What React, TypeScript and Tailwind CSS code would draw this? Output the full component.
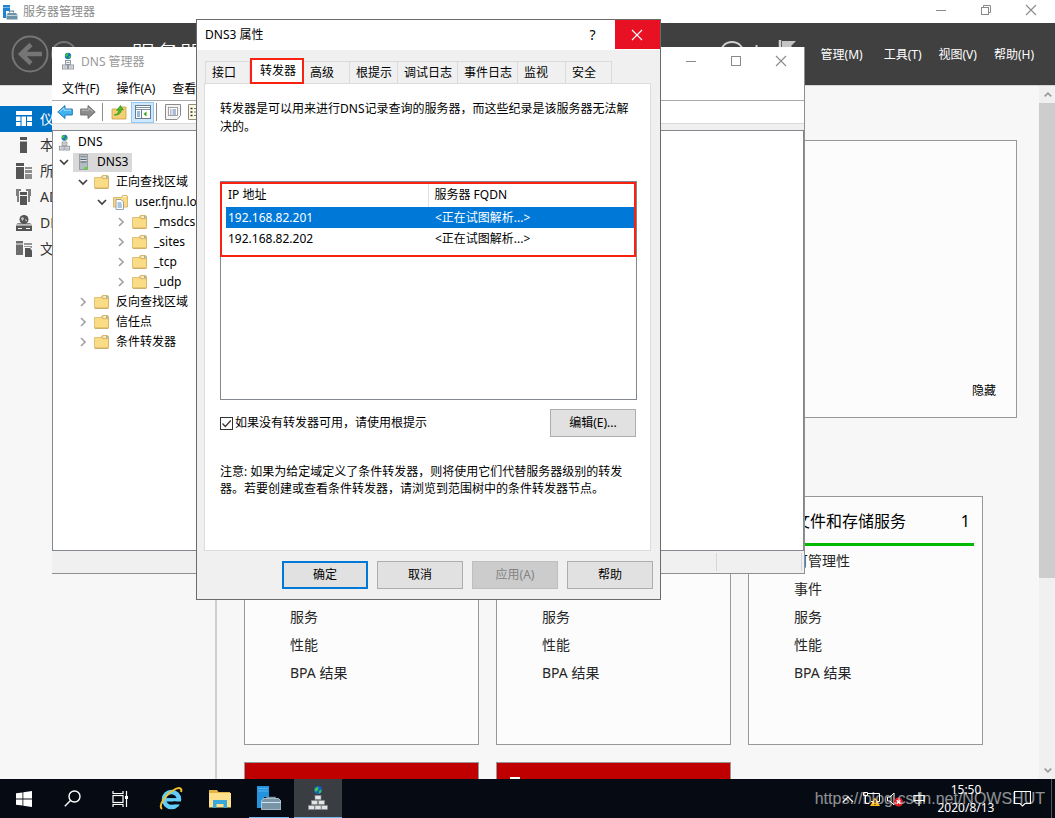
import React, { useState } from 'react';

type Level = 0 | 1 | 2 | 3 | 4;

interface TreeNode {
  label: string;
  level: Level;
  icon: 'dns' | 'server' | 'folder' | 'zone';
  open?: boolean;
  selected?: boolean;
}

const treeNodes: TreeNode[] = [
  { label: 'DNS', level: 0, icon: 'dns' },
  { label: 'DNS3', level: 1, icon: 'server', open: true, selected: true },
  { label: '正向查找区域', level: 2, icon: 'folder', open: true },
  { label: 'user.fjnu.local', level: 3, icon: 'zone', open: true },
  { label: '_msdcs', level: 4, icon: 'folder' },
  { label: '_sites', level: 4, icon: 'folder' },
  { label: '_tcp', level: 4, icon: 'folder' },
  { label: '_udp', level: 4, icon: 'folder' },
  { label: '反向查找区域', level: 2, icon: 'folder' },
  { label: '信任点', level: 2, icon: 'folder' },
  { label: '条件转发器', level: 2, icon: 'folder' },
];

const indent: Record<Level, string> = {
  0: 'pl-1',
  1: 'pl-[6px]',
  2: 'pl-[25px]',
  3: 'pl-11',
  4: 'pl-[63px]',
};

const tabs = [
  { label: '接口', width: 'w-[45px]' },
  { label: '转发器', width: 'w-[54px]' },
  { label: '高级', width: 'w-[46px]' },
  { label: '根提示', width: 'w-12' },
  { label: '调试日志', width: 'w-[60px]' },
  { label: '事件日志', width: 'w-[60px]' },
  { label: '监视', width: 'w-12' },
  { label: '安全', width: 'w-[46px]' },
];

const forwarders = ['192.168.82.201', '192.168.82.202'];

const roleItems = ['可管理性', '事件', '服务', '性能', 'BPA 结果'];

/* Icons */
const DnsIcon = ({ className }: { className: string }) => (
  <svg viewBox="0 0 16 18" className={className}>
    <circle cx="8" cy="4" r="3.2" fill="#1d6fc4" />
    <path d="M6 1.5 8.5 1 8 3.5 6.5 5 5 3.5zM8.5 4.5l2.5-1v2l-2 1.6z" fill="#3fc23b" />
    <g fill="#eceef0" stroke="#8a9097" strokeWidth="0.9">
      <rect x="5.5" y="8.5" width="5" height="4" />
      <rect x="2.5" y="13" width="5" height="4" />
      <rect x="8.5" y="13" width="5" height="4" />
    </g>
    <path d="M6.5 10.5h3M3.5 15h3M9.5 15h3" stroke="#8a9097" strokeWidth="0.8" />
  </svg>
);

const FolderIcon = () => (
  <svg viewBox="0 0 15 14" className="w-[15px] h-[14px]">
    <path d="M7.500 2.500V1.500l1-1h5l1 1V12h-7z" fill="#f0cd74" stroke="#c9a04a" strokeWidth="0.7" />
    <path d="M9.500 2h3" stroke="#fff" strokeWidth="1.200" />
    <path d="M12 2h1.500" stroke="#2b8fe0" strokeWidth="1.200" />
    <path d="M.5 2.500h7l1 1.200h6V13H.5z" fill="#fbdc86" stroke="#d3ac57" strokeWidth="0.7" />
    <path d="M.8 13.400h13.600" stroke="#b8913f" strokeWidth="0.7" />
  </svg>
);

const ZoneIcon = () => (
  <svg viewBox="0 0 15 15" className="w-[15px] h-[15px]">
    <path d="M.5 2.500h8l1-2H14l.5 1V12H.5z" fill="#fbdc86" stroke="#c9a04a" strokeWidth="0.7" />
    <path d="M10 1.500h3" stroke="#fff" />
    <path d="M3 4.500h5l2.500 2.500v7.500H3z" fill="#fff" stroke="#7f8b99" strokeWidth="0.8" />
    <path d="M4.500 8h4M4.500 10h4.500M4.500 12h4.500" stroke="#4f7fb5" strokeWidth="0.9" />
  </svg>
);

const ServerIcon = () => (
  <svg viewBox="0 0 15 16" className="w-[15px] h-4">
    <rect x="4.500" y=".5" width="8" height="15" fill="#b4bcc3" stroke="#8a9299" strokeWidth="0.8" />
    <path d="M5.500 3h6M5.500 5.500h6M5.500 8h6" stroke="#5d666e" />
    <path d="M5.500 4h6M5.500 6.500h6" stroke="#e8edf0" strokeWidth="0.8" />
    <rect x="9.500" y="13" width="2.500" height="2.500" fill="#4fe01a" />
  </svg>
);

const TreeIcon = ({ icon }: { icon: TreeNode['icon'] }) => {
  if (icon === 'dns') return <DnsIcon className="w-[15px] h-[17px]" />;
  if (icon === 'server') return <ServerIcon />;
  if (icon === 'zone') return <ZoneIcon />;
  return <FolderIcon />;
};

const Chevron = ({ open }: { open?: boolean }) => (
  <svg viewBox="0 0 10 10" className="w-[10px] h-[10px]" fill="none">
    {open ? (
      <path d="M1 3l4 4 4-4" stroke="#404040" strokeWidth="1.700" />
    ) : (
      <path d="M3 1l4 4-4 4" stroke="#a3a3a3" strokeWidth="1.700" />
    )}
  </svg>
);

const ToolboxIcon = () => (
  <svg viewBox="0 0 16 16" className="w-4 h-4">
    <path d="M1 1h7v6H4v7H1z" fill="#1f84cf" />
    <path d="M1 3.500h7" stroke="#8cc4ec" strokeWidth="0.8" />
    <path d="M7.500 8.500V7h4v1.500" fill="none" stroke="#5c7b8c" strokeWidth="1.200" />
    <path d="M4.500 11l1.500-2h8l1.500 2v4.500h-11z" fill="#6f93a6" />
    <path d="M4.500 11.500h11" stroke="#d6e3ea" strokeWidth="0.8" />
  </svg>
);

const MinimizeGlyph = () => (
  <svg viewBox="0 0 12 12" className="w-3 h-3"><path d="M1 6.500h10" stroke="#8a8a8a" /></svg>
);
const MaximizeGlyph = () => (
  <svg viewBox="0 0 12 12" className="w-3 h-3"><rect x="1.500" y="1.500" width="9" height="9" fill="none" stroke="#8a8a8a" /></svg>
);
const RestoreGlyph = () => (
  <svg viewBox="0 0 12 12" className="w-3 h-3" fill="none" stroke="#8a8a8a">
    <rect x="1.500" y="3.500" width="7" height="7" />
    <path d="M3.500 3.500v-2h7v7h-2" />
  </svg>
);
const CloseGlyph = ({ color }: { color: string }) => (
  <svg viewBox="0 0 12 12" className="w-3 h-3"><path d="M1 1l10 10M11 1L1 11" stroke={color} strokeWidth="1.100" /></svg>
);

const sidebarItems = [
  {
    label: '仪表板',
    icon: <path d="M0 0h16v4H0zM0 5.500h4.500v4.500H0zM0 11h4.500v4H0zM5.500 5.500h4.500V15H5.500zM11 5.500h5v4.500h-5zM11 11h5v4h-5z" fill="currentColor" />,
  },
  {
    label: '本地服务器',
    icon: <path d="M4 0h7v3H4zM4 4.500h7V16H4z" fill="currentColor" />,
  },
  {
    label: '所有服务器',
    icon: (
      <g fill="currentColor">
        <path d="M0 0h8v3H0zM0 4h8v12H0z" />
        <path d="M9 4h7v2H9zM9 7h7v3H9zM9 11h7v5H9z" opacity=".65" />
      </g>
    ),
  },
  {
    label: 'AD DS',
    icon: (
      <g fill="currentColor">
        <path d="M4 3h7v3H4zM4 7h7v9H4z" />
        <path d="M0 0h5v2H3v11H1V7H0zM10 0h5v7h-1v6h-2V2h-2z" opacity=".75" />
      </g>
    ),
  },
  {
    label: 'DNS',
    icon: (
      <g fill="currentColor">
        <circle cx="8" cy="4.500" r="4.500" />
        <path d="M5 3l2-1 1 2-2 2zM9 4l2 1-1 2z" fill="#f7f7f7" opacity=".7" />
        <path d="M2 8h12l2 1.500H0z" opacity=".7" />
        <path d="M0 10.500h16V16H0z" />
        <path d="M2 13.500h4M10 13.500h4" stroke="#f7f7f7" strokeWidth="1.200" />
      </g>
    ),
  },
  {
    label: '文件和存储服务',
    icon: (
      <g fill="currentColor">
        <path d="M0 0h7v2.500H0zM0 3.500h7V14H0z" opacity=".85" />
        <path d="M8 2h8v2H8zM8 5h8v2h-1l-1-1H8z" opacity=".6" />
        <path d="M9 7h5l2 2.500V16H9z" />
      </g>
    ),
  },
];

const RoleCard = ({ title, count }: { title: string; count: number }) => (
  <section className="w-[235px] h-[249px] shrink-0 border border-[#989898] bg-[#fcfcfc]">
    <div className="mx-2 h-[49px] border-b-[3px] border-[#00b900] pl-[37px] pr-1 pt-[2px] flex items-center justify-between text-base text-black">
      <h2>{title}</h2>
      <span>{count}</span>
    </div>
    <ul className="pl-[45px] pt-px text-sm leading-7 text-[#262626]">
      {roleItems.map((item) => (
        <li key={item}>{item}</li>
      ))}
    </ul>
  </section>
);

const ServerManager = () => (
  <div className="flex-1 min-h-0 flex flex-col">
    {/* Title bar */}
    <div className="h-[23px] shrink-0 bg-white flex items-center pl-[2px] pr-[2px]">
      <ToolboxIcon />
      <span className="ml-[5px] flex-1 text-[#8a8a8a]">服务器管理器</span>
      <button aria-label="最小化" className="w-[45px] h-full pb-1 flex items-center justify-center"><MinimizeGlyph /></button>
      <button aria-label="还原" className="w-[45px] h-full pb-1 flex items-center justify-center"><RestoreGlyph /></button>
      <button aria-label="关闭" className="w-[45px] h-full pb-1 flex items-center justify-center"><CloseGlyph color="#8a8a8a" /></button>
    </div>

    {/* Header */}
    <header className="h-[62px] shrink-0 bg-[#404040] text-white flex items-center pl-[11px] pr-[21px]">
      <button aria-label="后退">
        <svg viewBox="0 0 38 38" className="w-[38px] h-[38px]" fill="none" stroke="#757575">
          <circle cx="19" cy="19" r="17.500" strokeWidth="2" />
          <path d="M31 19H10M20 9.500L10 19l10 9.500" strokeWidth="4.500" />
        </svg>
      </button>
      <button aria-label="前进" className="ml-[2px]">
        <svg viewBox="0 0 26 26" className="w-[26px] h-[26px]" fill="none" stroke="#757575">
          <circle cx="13" cy="13" r="12" strokeWidth="2" />
        </svg>
      </button>
      <h1 className="ml-[54px] flex-1 text-2xl font-light">服务器管理器</h1>
      <svg viewBox="0 0 76 28" className="w-[76px] h-7 mr-[25px]" fill="none" stroke="#d0d0d0">
        <circle cx="12" cy="14" r="12" strokeWidth="1.800" />
        <path d="M36.500 5v18" strokeWidth="2" />
        <path d="M60 0v26" strokeWidth="2.500" />
        <path d="M62 1h14l-5 5 5 5H62z" fill="#c4c4c4" stroke="none" />
      </svg>
      <nav className="flex gap-[17px] pt-[2px]">
        <button className="mr-1">管理(M)</button>
        <button>工具(T)</button>
        <button>视图(V)</button>
        <button>帮助(H)</button>
      </nav>
    </header>

    <div className="flex-1 min-h-0 flex bg-[#f7f7f7] border-t border-[#d6d6d6] overflow-hidden">
      {/* Sidebar */}
      <nav className="w-[217px] shrink-0 pt-5 border-r-2 border-[#d0d0d0] text-sm text-[#333]">
        {sidebarItems.map((item, i) => (
          <a
            key={item.label}
            href="#"
            className={`h-[26px] flex items-center gap-[7px] pl-4 ${i === 0 ? 'bg-[#0072c6] text-white' : ''}`}
          >
            <svg viewBox="0 0 17 17" className={`w-[17px] h-[17px] ${i === 0 ? '' : 'text-[#555]'}`}>{item.icon}</svg>
            {item.label}
          </a>
        ))}
      </nav>

      {/* Dashboard */}
      <main className="flex-1 min-w-0 pt-[54px] pl-[27px] pr-[22px]">
        <section className="h-[278px] border border-[#989898] bg-[#fcfcfc] flex items-end justify-end px-5 pb-[18px]">
          <button>隐藏</button>
        </section>
        <div className="mt-[78px] flex gap-[17px]">
          <RoleCard title="AD DS" count={1} />
          <RoleCard title="DNS" count={1} />
          <RoleCard title="文件和存储服务" count={1} />
        </div>
        <div className="mt-[17px] flex gap-[17px]">
          <div className="w-[235px] h-16 border border-[#989898] bg-[#c00000]" />
          <div className="w-[235px] h-16 border border-[#989898] bg-[#c00000] pt-[14px] pl-[13px]">
            <div className="w-[10px] h-3 bg-white" />
          </div>
        </div>
      </main>

      {/* Scroll bar */}
      <div className="w-4 shrink-0 bg-[#f0f0f0] flex flex-col items-center">
        <svg viewBox="0 0 17 17" className="w-4 h-[17px] shrink-0"><path d="M6 10.500L9.500 7l3.500 3.500" fill="none" stroke="#9a9a9a" strokeWidth="1.800" /></svg>
        <div className="w-full h-[475px] bg-[#cdcdcd]" />
        <svg viewBox="0 0 17 17" className="w-4 h-[17px] mt-auto shrink-0"><path d="M6 6.500l3.500 3.500L13 6.500" fill="none" stroke="#9a9a9a" strokeWidth="1.800" /></svg>
      </div>
    </div>
  </div>
);

const DnsManager = () => (
  <div className="absolute left-[52px] top-[47px] w-[753px] border-r border-b border-[#8f8f8f] bg-white">
    <div className="h-7 flex items-center pl-2 pr-px">
      <DnsIcon className="w-4 h-[18px]" />
      <span className="ml-[5px] flex-1 pt-px text-[#999]">DNS 管理器</span>
      <button aria-label="最小化" className="w-[45px] h-full flex items-center justify-center"><MinimizeGlyph /></button>
      <button aria-label="最大化" className="w-[45px] h-full flex items-center justify-center"><MaximizeGlyph /></button>
      <button aria-label="关闭" className="w-[45px] h-full flex items-center justify-center"><CloseGlyph color="#8a8a8a" /></button>
    </div>
    <div className="h-[26px] flex items-center gap-[17px] px-[10px] pt-[2px] border-b border-[#a8a8a8]">
      <button>文件(F)</button>
      <button>操作(A)</button>
      <button>查看(V)</button>
    </div>

    {/* Toolbar */}
    <div className="h-[23px] flex items-center pl-[5px] border-b border-[#d9d9d9]">
      <button aria-label="后退">
        <svg viewBox="0 0 16 16" className="w-4 h-4"><path d="M.8 8L8 1.500V5h7.300v6H8v3.500z" fill="#3fb2f0" stroke="#1f6fae" strokeWidth="0.9" /><path d="M2.500 7.800L7 4v2.200h7.200" fill="none" stroke="#a5e0ff" /></svg>
      </button>
      <button aria-label="前进" className="ml-[7px]">
        <svg viewBox="0 0 16 16" className="w-4 h-4"><path d="M15.200 8L8 1.500V5H.7v6H8v3.500z" fill="#8d8d8d" stroke="#666" strokeWidth="0.9" /><path d="M1.500 6.200h7.300V4L13 7.500" fill="none" stroke="#bcbcbc" /></svg>
      </button>
      <span className="ml-[6px] w-px h-[18px] bg-[#8c8c8c]" />
      <button aria-label="向上一级" className="ml-2">
        <svg viewBox="0 0 16 16" className="w-4 h-4"><path d="M1 5h7l2-2h5v12H1z" fill="#f3cf73" stroke="#c9a04a" strokeWidth="0.8" /><path d="M3 11c3-.5 4.500-2 5-5L5.500 6.500 9.500 1.500l3 4.500-2-.3C10 9.500 7.500 11.500 3 11z" fill="#49b82b" stroke="#2c8a15" strokeWidth="0.6" /></svg>
      </button>
      <button aria-label="显示/隐藏控制台树" className="ml-1 w-[23px] h-[21px] bg-[#cde8ff] border border-[#92c9f5] flex items-center justify-center">
        <svg viewBox="0 0 16 14" className="w-4 h-[14px]">
          <rect x=".5" y=".5" width="15" height="13" fill="#fff" stroke="#6b7b8a" />
          <path d="M1 2.500h14M1 4.500h14" stroke="#7f93a6" />
          <path d="M6.500 5v8.500" stroke="#6b7b8a" />
          <path d="M2 7h3M2 9h3M2 11h3" stroke="#3577b5" />
          <path d="M11.500 6.500v5l-3-2.500z" fill="#35a51e" />
        </svg>
      </button>
      <span className="ml-[2px] w-px h-[18px] bg-[#8c8c8c]" />
      <button aria-label="属性" className="ml-2">
        <svg viewBox="0 0 16 16" className="w-4 h-4"><path d="M.5.5h15v11l-3.500 4H.5z" fill="#f4f4f4" stroke="#8c8c8c" /><rect x="3.500" y="3.500" width="9" height="8" fill="#fff" stroke="#8c8c8c" strokeWidth="0.8" /><path d="M5 6h1.500M7.500 6H11M5 8h1.500M7.500 8H11M5 10h1.500M7.500 10H11" stroke="#567a9c" /></svg>
      </button>
      <button aria-label="导出列表" className="ml-[7px]">
        <svg viewBox="0 0 16 16" className="w-4 h-4"><path d="M.5.5h12v15H.5z" fill="#fdf8dc" stroke="#8c8c8c" /><path d="M2.500 4.500h2M2.500 8h2M2.500 11.500h2" stroke="#333" strokeWidth="1.400" /><path d="M6 4.500h5M6 8h5M6 11.500h5" stroke="#567a9c" /></svg>
      </button>
    </div>

    <div className="h-[6px] bg-[#f0f0f0]" />
    <ul className="h-[421px] border border-[#828790] pt-px">
      {treeNodes.map((node) => (
        <li key={node.label} className={`h-5 flex items-center ${indent[node.level]}`}>
          {node.level > 0 && <span className="w-[14px] shrink-0"><Chevron open={node.open} /></span>}
          <span className={`h-[19px] flex items-center ${node.level > 0 ? 'gap-[7px] pl-[2px]' : 'gap-[6px]'} ${node.selected ? 'bg-[#d9d9d9] pr-1' : ''}`}>
            <TreeIcon icon={node.icon} />
            {node.label}
          </span>
        </li>
      ))}
    </ul>
    <div className="h-[22px] bg-[#f0f0f0] flex justify-end gap-[84px] py-[2px] pr-[2px]">
      <span className="w-px bg-[#d7d7d7]" />
      <span className="w-px bg-[#d7d7d7]" />
    </div>
  </div>
);

const PropertiesDialog = () => {
  const [activeTab, setActiveTab] = useState('转发器');
  const [selected, setSelected] = useState(forwarders[0]);
  const [useRootHints, setUseRootHints] = useState(true);

  return (
    <div role="dialog" aria-label="DNS3 属性" className="absolute left-[196px] top-[19px] w-[465px] border border-[#6b6b6b] bg-[#f0f0f0]">
      <div className="h-[30px] bg-white flex items-center pl-2">
        <span className="flex-1">DNS3 属性</span>
        <button aria-label="帮助主题" className="w-[45px] h-full text-sm">?</button>
        <button aria-label="关闭" className="w-[45px] h-[29px] self-start bg-[#e81123] flex items-center justify-center pr-[2px]">
          <CloseGlyph color="#fff" />
        </button>
      </div>

      <div className="px-2 pt-2 pr-[9px] -ml-px">
        {/* Tabs */}
        <div role="tablist" className="flex items-end pl-px">
          {tabs.map((tab) => (
            <button
              key={tab.label}
              role="tab"
              aria-selected={tab.label === activeTab}
              onClick={() => setActiveTab(tab.label)}
              className={`${tab.width} shrink-0 text-left ${
                tab.label === activeTab
                  ? 'h-[26px] -mb-px relative bg-white border-2 border-[#f9210f] pl-2'
                  : 'h-[22px] border-t border-r border-[#dadada] pl-[6px] first:border-l'
              }`}
            >
              {tab.label}
            </button>
          ))}
        </div>

        <div className="bg-white border border-[#dcdcdc] pl-[15px] pr-[13px] pt-4 pb-[53px]">
          <p className="leading-[18px] pr-1">
            转发器是可以用来进行DNS记录查询的服务器，而这些纪录是该服务器无法解决的。
          </p>

          <div className="relative mt-[45px] h-[219px] border border-[#828790]">
            <table className="w-full text-left table-fixed">
              <thead>
                <tr className="h-[25px]">
                  <th className="w-[5px]" />
                  <th className="w-[202px] font-normal pl-[2px] border-r border-[#e2e2e2]">IP 地址</th>
                  <th className="font-normal pl-[6px]">服务器 FQDN</th>
                </tr>
              </thead>
              <tbody>
                {forwarders.map((ip) => (
                  <tr key={ip} onClick={() => setSelected(ip)} className="h-[21px]">
                    <td />
                    <td className={`pl-[2px] ${ip === selected ? 'bg-[#0078d7] text-white' : ''}`}>{ip}</td>
                    <td className={`pl-[7px] ${ip === selected ? 'bg-[#0078d7] text-white' : ''}`}>&lt;正在试图解析...&gt;</td>
                  </tr>
                ))}
              </tbody>
            </table>
            {/* Highlight frame */}
            <div className="absolute -left-px right-0 top-0 h-[75px] border-2 border-[#f9210f] pointer-events-none" />
          </div>

          <div className="mt-[9px] flex items-center justify-between pr-px">
            <label className="flex items-center gap-[2px]">
              <span className="relative w-[13px] h-[13px]">
                <input
                  type="checkbox"
                  checked={useRootHints}
                  onChange={(e) => setUseRootHints(e.target.checked)}
                  className="block appearance-none w-[13px] h-[13px] border border-[#333] bg-white"
                />
                {useRootHints && (
                  <svg viewBox="0 0 13 13" className="absolute inset-0 w-[13px] h-[13px] pointer-events-none">
                    <path d="M2.500 6.500l2.800 3L10.800 3.500" fill="none" stroke="#333" strokeWidth="1.200" />
                  </svg>
                )}
              </span>
              如果没有转发器可用，请使用根提示
            </label>
            <button className="w-[86px] h-7 bg-[#e1e1e1] border border-[#adadad]">编辑(E)...</button>
          </div>

          <p className="mt-[26px] leading-[17px] pr-1">
            注意: 如果为给定域定义了条件转发器，则将使用它们代替服务器级别的转发器。若要创建或查看条件转发器，请浏览到范围树中的条件转发器节点。
          </p>
        </div>
      </div>

      <div className="flex justify-end gap-[9px] py-[10px] pr-[7px]">
        <button className="w-[86px] h-7 bg-[#e1e1e1] border-2 border-[#0078d7]">确定</button>
        <button className="w-[86px] h-7 bg-[#e1e1e1] border border-[#adadad]">取消</button>
        <button disabled className="w-[86px] h-7 bg-[#ccc] border border-[#bfbfbf] text-[#838383]">应用(A)</button>
        <button className="w-[86px] h-7 bg-[#e1e1e1] border border-[#adadad]">帮助</button>
      </div>
    </div>
  );
};

const Taskbar = () => (
  <footer className="relative h-[39px] shrink-0 bg-[#060a12] text-white flex items-stretch">
    <button aria-label="开始" className="w-12 flex items-center justify-center">
      <svg viewBox="0 0 16 16" className="w-4 h-4" fill="#fff"><path d="M0 2.300l6.500-.9v6.100H0zM7.300 1.300L16 0v7.500H7.300zM0 8.400h6.500v6.200L0 13.700zM7.300 8.400H16V16l-8.700-1.200z" /></svg>
    </button>
    <button aria-label="搜索" className="w-12 flex items-center justify-center">
      <svg viewBox="0 0 17 17" className="w-[17px] h-[17px]" fill="none" stroke="#fff" strokeWidth="1.400"><circle cx="10.500" cy="6.500" r="5.500" /><path d="M6.500 10.500L.8 16.200" /></svg>
    </button>
    <button aria-label="任务视图" className="w-12 flex items-center justify-center">
      <svg viewBox="0 0 17 16" className="w-[17px] h-4" fill="none" stroke="#fff" strokeWidth="1.200">
        <rect x="1" y="4.500" width="10" height="7" />
        <path d="M1 0v2.500h10V0M1 16v-2.500h10V16M14.500 0v16" />
        <rect x="13" y="5" width="3" height="3" fill="#fff" stroke="none" />
      </svg>
    </button>
    <button aria-label="Internet Explorer" className="ml-[3px] w-12 flex items-center justify-center">
      <svg viewBox="0 0 24 24" className="w-6 h-6" fill="none">
        <circle cx="12.500" cy="12.500" r="7.500" stroke="#62cdf7" strokeWidth="4.500" />
        <path d="M6 12.800h16" stroke="#62cdf7" strokeWidth="3.500" />
        <path d="M14 17.400h9.500v-2.900H14z" fill="#060a12" />
        <path d="M3 22C-1 19 6 8 14 3.500 20-.5 23.500.8 22 5" stroke="#f2c12e" strokeWidth="2" />
      </svg>
    </button>
    <button aria-label="文件资源管理器" className="w-[50px] flex items-center justify-center">
      <svg viewBox="0 0 22 18" className="w-[22px] h-[18px]">
        <path d="M0 0h8l1.500 2H21v3H0z" fill="#e5b544" />
        <path d="M0 3h22v14.500H0z" fill="#fce08c" />
        <path d="M4 10h14v8h-3.500v-4h-7v4H4z" fill="#3aa7dc" />
      </svg>
    </button>
    <button aria-label="服务器管理器" className="ml-1 mr-[5px] w-10 border-b border-[#76b9ed] flex items-center justify-center">
      <svg viewBox="0 0 24 24" className="w-6 h-6">
        <path d="M0 0h12v11H7v11H0z" fill="#2393df" />
        <path d="M1 2.500h10M1 5h10" stroke="#56b3ee" />
        <path d="M10 14v-2.500h8V14" fill="none" stroke="#7f97a5" strokeWidth="1.500" />
        <path d="M4.500 15l2-2.500h15l2.500 2.500v8.500H4.500z" fill="#7795a6" stroke="#c3d3dc" strokeWidth="0.8" />
        <path d="M5 16.500h19" stroke="#d6e3ea" />
      </svg>
    </button>
    <button aria-label="DNS 管理器" className="w-12 border-b border-[#76b9ed] bg-[#3a3e43] flex items-center justify-center">
      <svg viewBox="0 0 20 24" className="w-5 h-6">
        <circle cx="10" cy="4" r="4" fill="#1560c4" />
        <path d="M7.500 2L10 .8l.5 2.700L8 6 6.500 4zM11 5l2.500-1.500L13 6.500 11 7.500z" fill="#42c93c" />
        <g fill="#e3e4e6" stroke="#888" strokeWidth="0.6">
          <rect x="7" y="9.500" width="6" height="4" />
          <rect x="3.500" y="14.500" width="6" height="4" /><rect x="10.500" y="14.500" width="6" height="4" />
          <rect x=".5" y="19.500" width="6" height="4" /><rect x="7" y="19.500" width="6" height="4" /><rect x="13.500" y="19.500" width="6" height="4" />
        </g>
      </svg>
    </button>

    {/* Tray */}
    <div className="ml-auto flex items-center">
      <button aria-label="显示隐藏的图标">
        <svg viewBox="0 0 12 8" className="w-3 h-2"><path d="M1 7l5-5 5 5" fill="none" stroke="#fff" strokeWidth="1.300" /></svg>
      </button>
      <svg viewBox="0 0 17 16" className="w-[17px] h-4 ml-[9px]" fill="none">
        <path d="M4 2.500h12.500v8H8M.5 1.500h4v3h-4zM2.500 4.500v8H6" stroke="#fff" />
        <path d="M12 6.500l5 8.500H7z" fill="#fdbb1c" />
        <path d="M12 9v3M12 13v1" stroke="#222" strokeWidth="1.200" />
      </svg>
      <svg viewBox="0 0 17 16" className="w-[17px] h-4 ml-[7px]" fill="none">
        <path d="M.5 6h2.500l4-4v12l-4-4H.5z" stroke="#fff" />
        <circle cx="11.500" cy="11" r="4.500" fill="#e01b24" />
        <path d="M9.700 9.200l3.600 3.600M13.300 9.200l-3.600 3.600" stroke="#fff" strokeWidth="1.300" />
      </svg>
      <span className="ml-2 text-sm">中</span>
      <div className="ml-[9px] w-[62px] flex flex-col items-center leading-[18px]">
        <span>15:50</span>
        <span>2020/8/13</span>
      </div>
      <button aria-label="通知" className="ml-[17px] mr-6">
        <svg viewBox="0 0 17 17" className="w-[17px] h-[17px]"><path d="M.5 1.500h16v12h-5.500l-2.500 2.500-2.500-2.500H.5z" fill="none" stroke="#fff" strokeWidth="1.200" /></svg>
      </button>
    </div>
    <span className="absolute right-[3px] top-0 w-px h-full bg-[#51555b]" />
    <span className="absolute right-[10px] bottom-[9px] text-base leading-5 font-['Liberation_Sans',sans-serif] text-white/55 pointer-events-none">
      https://blog.csdn.net/NOWSHUT
    </span>
  </footer>
);

const App: React.FC = () => {
  return (
    <div className="relative h-screen overflow-hidden flex flex-col text-xs text-black font-['Noto_Sans','Noto_Sans_CJK_SC',sans-serif]">
      <ServerManager />
      <DnsManager />
      <PropertiesDialog />
      <Taskbar />
    </div>
  );
};

export default App;
